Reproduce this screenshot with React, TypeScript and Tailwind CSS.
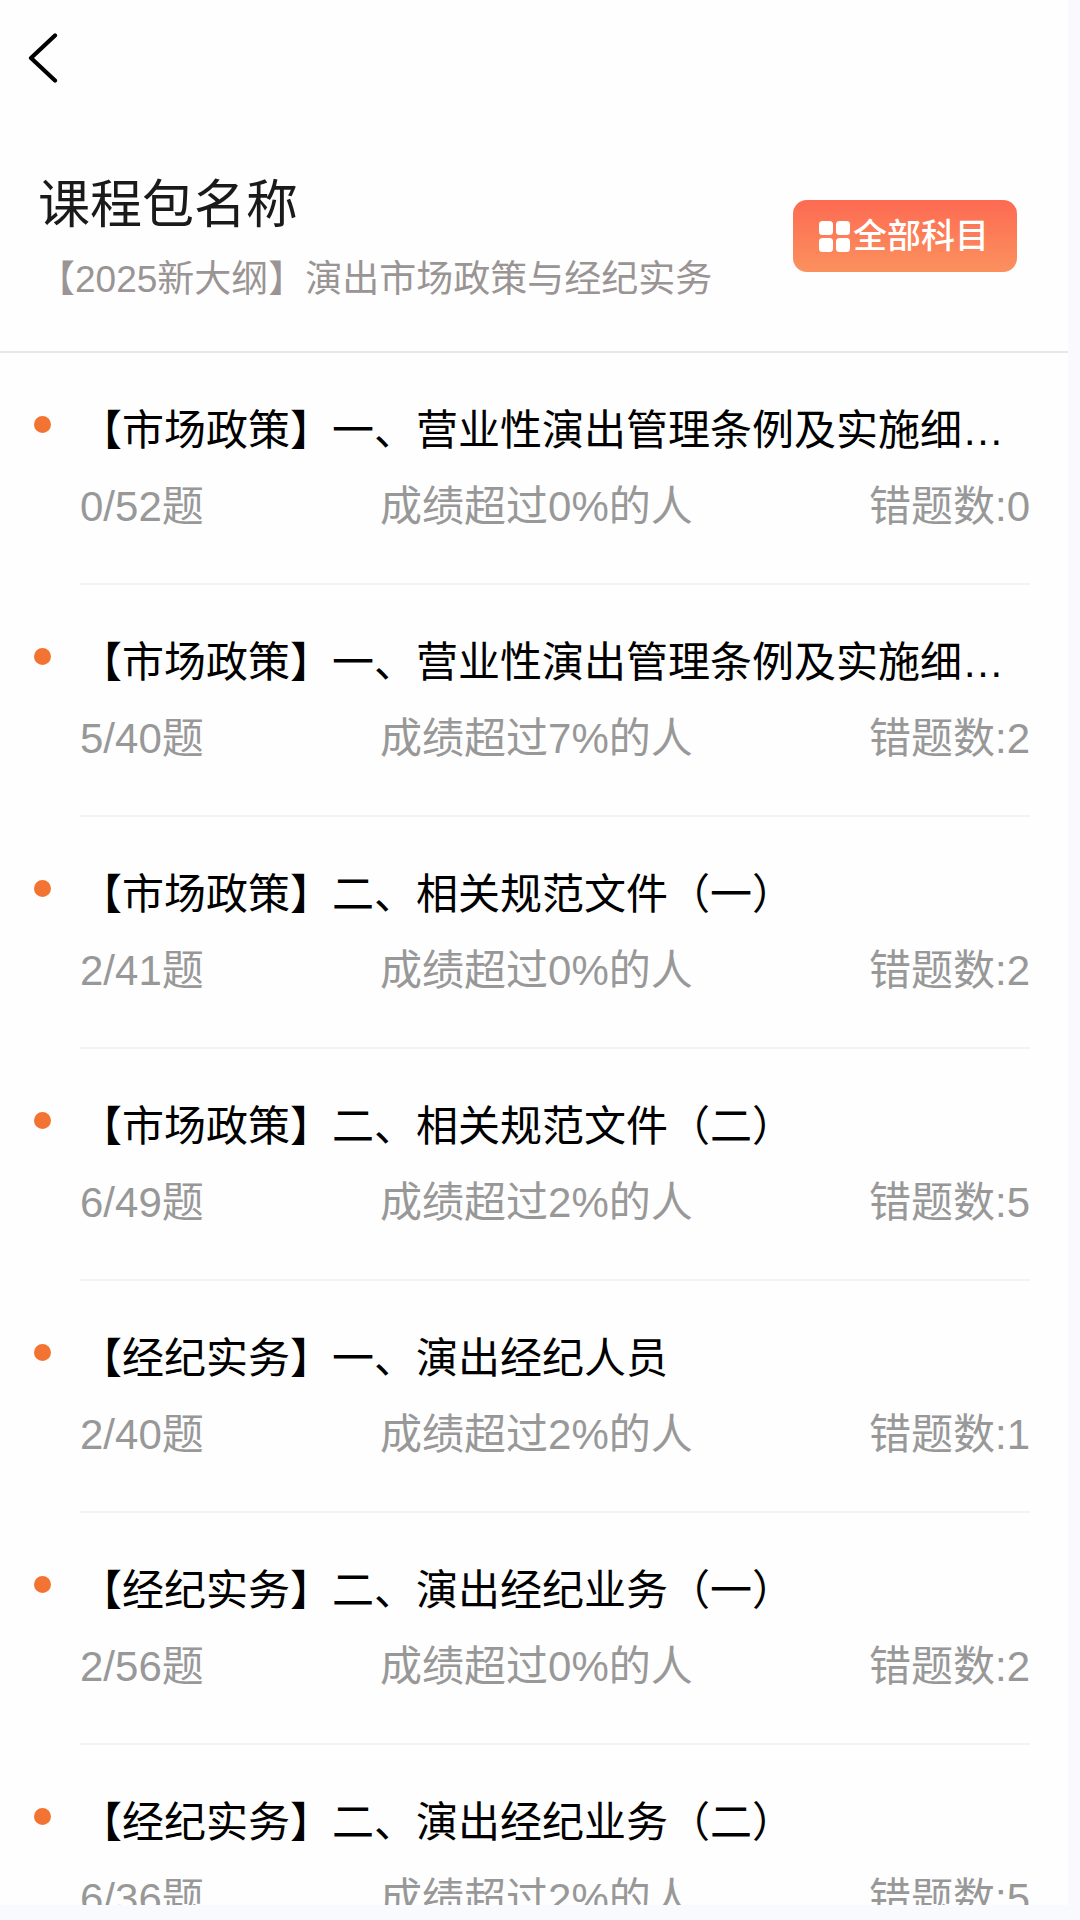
interface Chapter {
  id: number
  title: string
  done: number
  total: number
  beat: number
  wrong: number
}

const CHAPTERS: Chapter[] = [
  { id: 1, title: '【市场政策】一、营业性演出管理条例及实施细则（一）', done: 0, total: 52, beat: 0, wrong: 0 },
  { id: 2, title: '【市场政策】一、营业性演出管理条例及实施细则（二）', done: 5, total: 40, beat: 7, wrong: 2 },
  { id: 3, title: '【市场政策】二、相关规范文件（一）', done: 2, total: 41, beat: 0, wrong: 2 },
  { id: 4, title: '【市场政策】二、相关规范文件（二）', done: 6, total: 49, beat: 2, wrong: 5 },
  { id: 5, title: '【经纪实务】一、演出经纪人员', done: 2, total: 40, beat: 2, wrong: 1 },
  { id: 6, title: '【经纪实务】二、演出经纪业务（一）', done: 2, total: 56, beat: 0, wrong: 2 },
  { id: 7, title: '【经纪实务】二、演出经纪业务（二）', done: 6, total: 36, beat: 2, wrong: 5 },
]

function BackIcon() {
  return (
    <svg className="h-[50px] w-[30px]" viewBox="0 0 30 50" fill="none" aria-hidden="true">
      <path d="M27 2.5 3 25 27 47.5" stroke="currentColor" strokeWidth="4.2" strokeLinecap="round" strokeLinejoin="round" />
    </svg>
  )
}

function GridIcon() {
  return (
    <svg className="h-[31px] w-[31px]" viewBox="0 0 31 31" fill="currentColor" aria-hidden="true">
      <rect x="0" y="0" width="14" height="14" rx="3.5" />
      <rect x="17" y="0" width="14" height="14" rx="3.5" />
      <rect x="0" y="17" width="14" height="14" rx="3.5" />
      <rect x="17" y="17" width="14" height="14" rx="3.5" />
    </svg>
  )
}

function ChapterRow({ chapter }: { chapter: Chapter }) {
  return (
    <li className="flex pr-[38px]">
      {/* Bullet */}
      <div className="w-20 shrink-0 pt-[63px] pl-[34px]">
        <div className="h-[17px] w-[17px] rounded-full bg-[#f37432]" />
      </div>

      <div className="min-w-0 flex-1 border-b-2 border-[#f3f3f3] pt-12 pb-[46px]">
        <h2 className="truncate text-[42px] leading-[60px] text-black">{chapter.title}</h2>
        <div className="mt-4 flex justify-between text-[42px] leading-[60px] text-[#989898]">
          <span>{chapter.done}/{chapter.total}题</span>
          <span>成绩超过{chapter.beat}%的人</span>
          <span>错题数:{chapter.wrong}</span>
        </div>
      </div>
    </li>
  )
}

export default function App() {
  return (
    <div className="h-screen bg-[#f8fafd] pr-3 pb-[15px] font-['Liberation_Sans','Noto_Sans_CJK_SC',sans-serif]">
      <div className="flex h-full flex-col overflow-hidden bg-[#fefefe]">
        <nav className="px-7 pt-[33px]">
          <button type="button" aria-label="返回" className="block text-black">
            <BackIcon />
          </button>
        </nav>

        {/* Course package */}
        <header className="flex items-start justify-between border-b-2 border-[#e8e8e8] pt-[86px] pr-[51px] pb-[44px] pl-[38px]">
          <div>
            <h1 className="text-[52px] leading-[72px] text-[#1a1a1a]">课程包名称</h1>
            <p className="mt-3 text-[37px] leading-[54px] text-[#9a9494]">【2025新大纲】演出市场政策与经纪实务</p>
          </div>
          <button
            type="button"
            className="mt-[31px] flex h-[72px] shrink-0 items-center gap-[3px] rounded-[14px] bg-linear-to-b from-[#fd6a52] to-[#fb905e] pr-7 pl-[26px] text-[34px] leading-[48px] font-medium text-white"
          >
            <GridIcon />
            全部科目
          </button>
        </header>

        <ul className="min-h-0 flex-1 overflow-hidden">
          {CHAPTERS.map((chapter) => (
            <ChapterRow key={chapter.id} chapter={chapter} />
          ))}
        </ul>
      </div>
    </div>
  )
}
